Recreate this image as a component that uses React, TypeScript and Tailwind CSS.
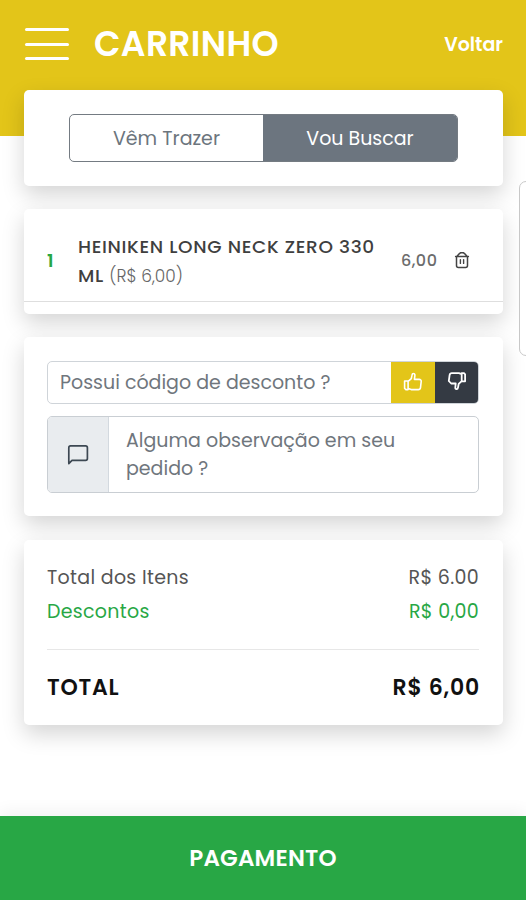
import type { ReactNode } from "react";
import { clsx } from "clsx";

interface CardProps {
  className?: string;
  children: ReactNode;
}

function Card({ className, children }: CardProps) {
  return (
    <section className={clsx("rounded-[5px] bg-white shadow-[0_9px_22px_rgba(0,0,0,0.17)]", className)}>
      {children}
    </section>
  );
}

function TrashIcon() {
  return (
    <svg className="mb-0.5 h-[18px] w-[16px]" viewBox="0 0 16 18" fill="none" stroke="#444" strokeWidth="1.5" strokeLinecap="round" strokeLinejoin="round">
      <path d="M1.6 5.4h12.8M3 5.2l2.2-2.4 1.2-1h3.2l1.2 1L13 5.2M2.5 5.4v9c0 1.2.7 2 1.9 2h7.2c1.2 0 1.9-.8 1.9-2v-9" />
      <path d="M6.4 8.6v3.8M9.6 8.6v3.8" strokeWidth="1.4" />
    </svg>
  );
}

function ThumbUpIcon() {
  return (
    <svg className="h-5 w-5" viewBox="0 0 20 20" fill="none" stroke="currentColor" strokeWidth="1.6" strokeLinecap="round" strokeLinejoin="round">
      <path d="M1.6 9h3.5v8.6H2.7l-1.1-1.3ZM5.1 9.4l3.2-2.8.7-3.4c.2-1.2.7-1.8 1.5-1.7 1 .1 1.5 1 1.4 2l-.5 3.9h4.7c1.4 0 2.3.9 2.1 2.1l-.7 6.1c-.2 1.3-1 2-2.2 2H8.2l-3.1-1.2" />
    </svg>
  );
}

function ThumbDownIcon() {
  return (
    <svg className="h-5 w-5" viewBox="0 0 20 20" fill="none" stroke="currentColor" strokeWidth="1.8" strokeLinecap="round" strokeLinejoin="round">
      <path d="M14.7 10.3h3.4V3.4L17 2.1h-2.3ZM14.7 10.1l-3 2.8-.7 3.7c-.2 1.1-.7 1.6-1.4 1.5-.9-.1-1.4-.9-1.3-1.8l.4-3.8H4.2L1.8 10l.8-5.8c.2-1.3.9-2.1 2.2-2.1h7.1l2.8 1" />
    </svg>
  );
}

function MessageIcon() {
  return (
    <svg className="h-[22px] w-[22px]" viewBox="0 0 22 22" fill="none" stroke="#3d4853" strokeWidth="1.7" strokeLinecap="round" strokeLinejoin="round">
      <path d="M1.8 19.6V3.7c0-1.2.6-1.8 1.8-1.8h15c1.2 0 1.8.6 1.8 1.8v10.9c0 1.2-.6 1.8-1.8 1.8H5Z" />
    </svg>
  );
}

export default function App() {
  return (
    <div className="relative flex h-[900px] w-[526px] flex-col overflow-hidden bg-white font-['Poppins','Inter','Liberation_Sans',sans-serif] text-[#555] [font-feature-settings:'cv11']">
      <header className="flex h-[136px] shrink-0 items-start bg-[#e3c519] pr-[23px] pl-[25px] text-white">
        <button type="button" aria-label="Menu" className="mt-7 flex w-11 flex-col gap-[11.5px]">
          <span className="h-[3px] rounded-full bg-white" />
          <span className="h-[3px] rounded-full bg-white" />
          <span className="h-[3px] rounded-full bg-white" />
        </button>
        <h1 className="mt-[22px] ml-[25px] text-[34.5px] leading-[44px] font-semibold tracking-[0.35px] whitespace-nowrap">CARRINHO</h1>
        <a className="mt-[31px] ml-auto text-[19px] leading-7 font-semibold">Voltar</a>
      </header>

      <main className="-mt-[46px] flex flex-col pr-[23px] pl-6">
        <Card className="flex h-24 items-start px-[45px] pt-6">
          <div className="flex h-12 w-[389px] overflow-hidden rounded-[5px] border border-[#747b82] text-[19px]">
            <button type="button" className="w-[193px] pt-0.5 text-[#6c757d]">Vêm Trazer</button>
            <button type="button" className="flex-1 bg-[#6c757f] pt-0.5 text-white">Vou Buscar</button>
          </div>
        </Card>

        <Card className="mt-[23px] h-[105px]">
          <div className="flex h-[93px] items-center border-b border-[#dedede] pt-[11px] pr-[33px] pl-[23px]">
            <span className="w-[31px] text-[18px] font-semibold text-[#28a745]">1</span>
            <p className="w-[310px] pt-px text-[18.5px] leading-[29px] font-medium tracking-[0.65px] whitespace-nowrap text-[#3f3f3f]">
              HEINIKEN LONG NECK ZERO 330
              <br />
              ML <span className="text-[17px] font-light tracking-normal text-[#666]">(R$ 6,00)</span>
            </p>
            <span className="ml-[13px] flex-1 text-[16px] font-medium tracking-[0.5px] text-[#6c6c6c]">6,00</span>
            <TrashIcon />
          </div>
        </Card>

        <Card className="mt-[23px] h-[179px] pt-6 pr-6 pl-[23px]">
          <div className="flex h-[43px] overflow-hidden rounded-[5px] border border-[#cfd4d9]">
            <div className="flex flex-1 items-center pt-0.5 pl-3 text-[19px] text-[#6f767d]">Possui código de desconto ?</div>
            <button type="button" aria-label="Aplicar" className="-my-px flex w-11 items-center justify-center bg-[#e3c519] pb-0.5 text-white">
              <ThumbUpIcon />
            </button>
            <button type="button" aria-label="Remover" className="-my-px -mr-px flex w-11 items-center justify-center bg-[#343a43] pb-1 text-white">
              <ThumbDownIcon />
            </button>
          </div>
          <div className="mt-3 flex h-[77px] overflow-hidden rounded-[5px] border border-[#c9ced3]">
            <div className="flex w-[61px] items-center justify-center border-r border-[#d3d9df] bg-[#e9ecef]">
              <MessageIcon />
            </div>
            <p className="pt-[10px] pl-[17px] text-[19px] leading-[28px] text-[#6f767d]">
              Alguma observação em seu
              <br />
              pedido ?
            </p>
          </div>
        </Card>

        <Card className="mt-6 flex h-[185px] flex-col pt-[21px] pr-6 pl-[23px]">
          <div className="flex h-[34px] items-center justify-between text-[19px] tracking-[0.3px]">
            <span>Total dos Itens</span>
            <span>R$ 6.00</span>
          </div>
          <div className="flex h-[34px] items-center justify-between text-[19px] tracking-[0.3px] text-[#28a745]">
            <span>Descontos</span>
            <span>R$ 0,00</span>
          </div>
          <hr className="mt-5 border-[#e7e7e7]" />
          <div className="mt-5 -mr-px flex h-[34px] items-center justify-between text-[22px] font-semibold tracking-[0.8px] text-[#111]">
            <span>TOTAL</span>
            <span>R$ 6,00</span>
          </div>
        </Card>
      </main>

      <aside className="absolute top-[181px] left-[519px] h-[175px] w-10 rounded-[7px] border border-[#c8c8c8] bg-white" />

      <footer className="mt-auto flex h-[84px] shrink-0 items-center justify-center bg-[#28a745] text-[23px] font-semibold tracking-[0.2px] text-white shadow-[0_-4px_16px_rgba(0,0,0,0.06)]">
        PAGAMENTO
      </footer>
    </div>
  );
}
